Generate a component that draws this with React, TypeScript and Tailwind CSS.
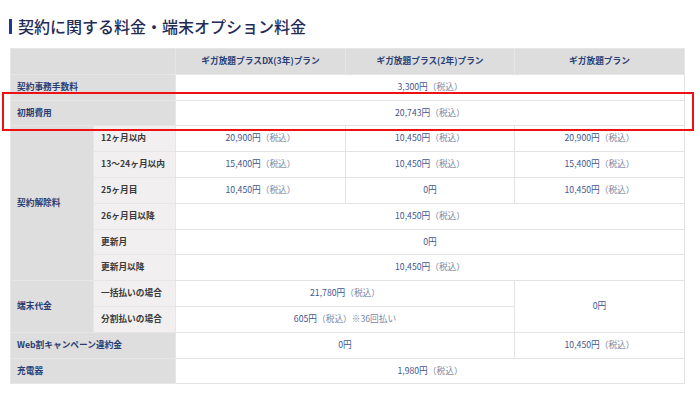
import React from 'react'

const font = { fontFamily: '"Noto Sans CJK JP", "Noto Sans", sans-serif' }

function Price({ value, tax = true, note }: { value: string; tax?: boolean; note?: string }) {
  return (
    <span>
      <span className="text-[#3f5893]">{value}</span>
      {tax && <span className="text-[#7b86a3]">（税込）</span>}
      {note && <span className="text-[#7b86a3]">{note}</span>}
    </span>
  )
}

const th = 'border border-[#e6e6e6] bg-[#dddddd] text-[#2a3d74] font-bold text-center'
const label = 'border border-[#e6e6e6] bg-[#dedede] text-[#2a3d74] font-bold text-left pl-[6px]'
const sub = 'border border-[#e6e6e6] bg-[#f1efef] text-[#3a3a3a] font-bold text-left pl-[7px]'
const val = 'border border-[#e3e3e3] bg-white text-center'

export default function App() {
  return (
    <div className="relative w-[700px] h-[400px] bg-white" style={font}>
      <div className="pt-[17px] pl-[9px] flex items-center gap-[6px]">
        <div className="w-[3px] h-[15px] bg-[#1d3a8c]"></div>
        <h1 className="text-[16px] leading-[18px] font-medium text-[#1f2b57]">契約に関する料金・端末オプション料金</h1>
      </div>

      <table className="mt-[13px] ml-[10px] w-[674px] border-collapse table-fixed text-[8.7px] leading-none">
        <colgroup>
          <col className="w-[83px]" />
          <col className="w-[82px]" />
          <col className="w-[170px]" />
          <col className="w-[169px]" />
          <col className="w-[170px]" />
        </colgroup>
        <thead>
          <tr className="h-[25.8px]">
            <th colSpan={2} className={th}></th>
            <th className={th}>ギガ放題プラスDX(3年)プラン</th>
            <th className={th}>ギガ放題プラス(2年)プラン</th>
            <th className={th}>ギガ放題プラン</th>
          </tr>
        </thead>
        <tbody>
          <tr className="h-[25.8px]">
            <td colSpan={2} className={label}>契約事務手数料</td>
            <td colSpan={3} className={val}><Price value="3,300円" /></td>
          </tr>
          <tr className="h-[25.8px]">
            <td colSpan={2} className={label}>初期費用</td>
            <td colSpan={3} className={val}><Price value="20,743円" /></td>
          </tr>
          <tr className="h-[25.8px]">
            <td rowSpan={6} className={label}>契約解除料</td>
            <td className={sub}>12ヶ月以内</td>
            <td className={val}><Price value="20,900円" /></td>
            <td className={val}><Price value="10,450円" /></td>
            <td className={val}><Price value="20,900円" /></td>
          </tr>
          <tr className="h-[25.8px]">
            <td className={sub}>13〜24ヶ月以内</td>
            <td className={val}><Price value="15,400円" /></td>
            <td className={val}><Price value="10,450円" /></td>
            <td className={val}><Price value="15,400円" /></td>
          </tr>
          <tr className="h-[25.8px]">
            <td className={sub}>25ヶ月目</td>
            <td className={val}><Price value="10,450円" /></td>
            <td className={val}><Price value="0円" tax={false} /></td>
            <td className={val}><Price value="10,450円" /></td>
          </tr>
          <tr className="h-[25.8px]">
            <td className={sub}>26ヶ月目以降</td>
            <td colSpan={3} className={val}><Price value="10,450円" /></td>
          </tr>
          <tr className="h-[25.8px]">
            <td className={sub}>更新月</td>
            <td colSpan={3} className={val}><Price value="0円" tax={false} /></td>
          </tr>
          <tr className="h-[25.8px]">
            <td className={sub}>更新月以降</td>
            <td colSpan={3} className={val}><Price value="10,450円" /></td>
          </tr>
          <tr className="h-[25.8px]">
            <td rowSpan={2} className={label}>端末代金</td>
            <td className={sub}>一括払いの場合</td>
            <td colSpan={2} className={val}><Price value="21,780円" /></td>
            <td rowSpan={2} className={val}><Price value="0円" tax={false} /></td>
          </tr>
          <tr className="h-[25.8px]">
            <td className={sub}>分割払いの場合</td>
            <td colSpan={2} className={val}><Price value="605円" note="※36回払い" /></td>
          </tr>
          <tr className="h-[25.8px]">
            <td colSpan={2} className={label}>Web割キャンペーン違約金</td>
            <td colSpan={2} className={val}><Price value="0円" tax={false} /></td>
            <td className={val}><Price value="10,450円" /></td>
          </tr>
          <tr className="h-[25.8px]">
            <td colSpan={2} className={label}>充電器</td>
            <td colSpan={3} className={val}><Price value="1,980円" /></td>
          </tr>
        </tbody>
      </table>

      {/* highlight */}
      <div className="absolute left-[2px] top-[92px] w-[692px] h-[39px] border-2 border-[#ee1111]"></div>
    </div>
  )
}
